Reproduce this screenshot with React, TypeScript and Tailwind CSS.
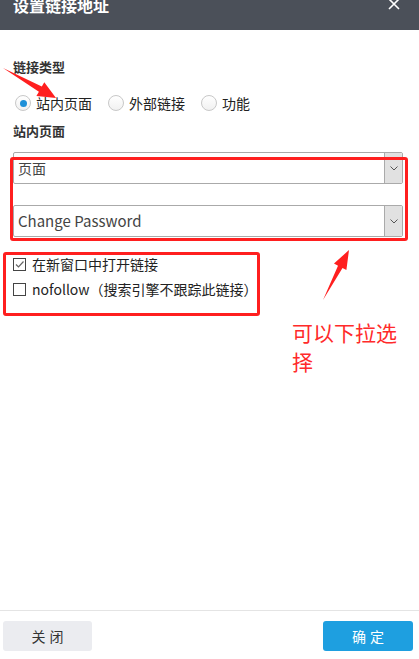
import React from "react";

const FONT = { fontFamily: '"Noto Sans CJK SC", "Open Sans", sans-serif' };

// arrow polygon from tail to tip, tapering shaft with a wide head
function arrowPoints(
  tx: number,
  ty: number,
  px: number,
  py: number,
  head: number,
  headHalf: number,
  shaftHalf: number
): string {
  const dx = px - tx;
  const dy = py - ty;
  const len = Math.hypot(dx, dy);
  const ux = dx / len;
  const uy = dy / len;
  const nx = -uy;
  const ny = ux;
  const bx = px - ux * head;
  const by = py - uy * head;
  const pts = [
    [tx, ty],
    [bx + nx * shaftHalf, by + ny * shaftHalf],
    [bx + nx * headHalf, by + ny * headHalf],
    [px, py],
    [bx - nx * headHalf, by - ny * headHalf],
    [bx - nx * shaftHalf, by - ny * shaftHalf],
  ];
  return pts.map((p) => p[0].toFixed(1) + "," + p[1].toFixed(1)).join(" ");
}

function Radio({ checked, label }: { checked?: boolean; label: string }) {
  return (
    <label className="flex items-center gap-[5px]">
      <span className="flex h-[16px] w-[16px] items-center justify-center rounded-full border border-[#c8c8c8] bg-gradient-to-b from-white to-[#f1f1f1]">
        {checked && <span className="h-[7px] w-[7px] rounded-full bg-[#1e90d8]" />}
      </span>
      <span className="text-[14px] leading-[20px] text-[#222]">{label}</span>
    </label>
  );
}

function Checkbox({ checked, label }: { checked?: boolean; label: string }) {
  return (
    <label className="flex h-[20px] items-center gap-[6px]">
      <span className="flex h-[13px] w-[13px] items-center justify-center border border-[#444] bg-white">
        {checked && (
          <svg width="11" height="11" viewBox="0 0 11 11">
            <path d="M2 5.5 L4.5 8 L9.5 2.5" fill="none" stroke="#666" strokeWidth="1.2" />
          </svg>
        )}
      </span>
      <span className="text-[14px] leading-[20px] text-[#222]">{label}</span>
    </label>
  );
}

function Select({ value, size }: { value: string; size: string }) {
  return (
    <div className="flex h-[32px] w-[390px] items-stretch rounded-[2px] border border-[#aaa] bg-white">
      <div className={"flex flex-1 items-center pl-[4px] text-[#444] " + size}>{value}</div>
      <div className="flex w-[18px] items-center justify-center rounded-r-[2px] border-l border-[#aaa] bg-[#e1e1e1]">
        <svg width="8" height="5" viewBox="0 0 8 5">
          <path d="M0.5 0.5 L4 4 L7.5 0.5" fill="none" stroke="#555" strokeWidth="1" />
        </svg>
      </div>
    </div>
  );
}

export default function App() {
  return (
    <div className="relative flex h-[659px] w-[419px] flex-col overflow-hidden bg-white" style={FONT}>
      {/* header */}
      <div className="flex h-[30px] shrink-0 items-start justify-between overflow-hidden bg-[#4b5059] pl-[13px] pr-[19px]">
        <div className="-mt-[3px] text-[16px] font-bold leading-[16px] text-white">设置链接地址</div>
        <svg width="12" height="12" viewBox="0 0 12 12" className="-mt-[2px]">
          <path d="M1 1 L11 11 M11 1 L1 11" stroke="#fff" strokeWidth="1.6" />
        </svg>
      </div>

      {/* body */}
      <div className="flex flex-1 flex-col px-[13px]">
        <div className="mt-[28px] text-[13px] font-bold leading-[18px] text-[#333]">链接类型</div>
        <div className="mt-[17px] flex h-[20px] items-center gap-[16px] pl-[2px]">
          <Radio checked label="站内页面" />
          <Radio label="外部链接" />
          <Radio label="功能" />
        </div>
        <div className="mt-[9px] text-[13px] font-bold leading-[18px] text-[#333]">站内页面</div>
        <div className="mt-[12px]">
          <Select value="页面" size="text-[14px]" />
        </div>
        <div className="mt-[21px]">
          <Select value="Change Password" size="text-[15px]" />
        </div>
        <div className="mt-[17px] flex flex-col gap-[5px]">
          <Checkbox checked label="在新窗口中打开链接" />
          <Checkbox label="nofollow（搜索引擎不跟踪此链接）" />
        </div>
      </div>

      {/* footer */}
      <div className="flex h-[49px] shrink-0 items-start justify-between border-t border-[#e4e4e4] pl-[3px] pr-[6px] pt-[10px]">
        <button className="h-[30px] w-[89px] rounded-[3px] bg-[#ebecf0] pl-[4px] text-[14px] tracking-[4px] text-[#333]">关闭</button>
        <button className="h-[30px] w-[90px] rounded-[3px] bg-[#1e9fe0] pl-[4px] text-[14px] tracking-[4px] text-white">确定</button>
      </div>

      {/* annotations */}
      <div className="pointer-events-none absolute left-[10px] top-[157px] h-[84px] w-[398px] rounded-[3px] border-[3px] border-[#ff1f1f]" />
      <div className="pointer-events-none absolute left-[3px] top-[252px] h-[64px] w-[257px] rounded-[3px] border-[3px] border-[#ff1f1f]" />
      <div className="pointer-events-none absolute left-[292px] top-[318px] w-[112px] text-[21px] leading-[29px] text-[#ff2a2a]">
        可以下拉选择
      </div>
      <svg className="pointer-events-none absolute left-0 top-0" width="419" height="659">
        <polygon points={arrowPoints(3, 68, 56, 98, 18, 8, 3)} fill="#ff1f1f" />
        <polygon points={arrowPoints(323, 300, 349, 250, 19, 7, 2.5)} fill="#ff1f1f" />
      </svg>
    </div>
  );
}
